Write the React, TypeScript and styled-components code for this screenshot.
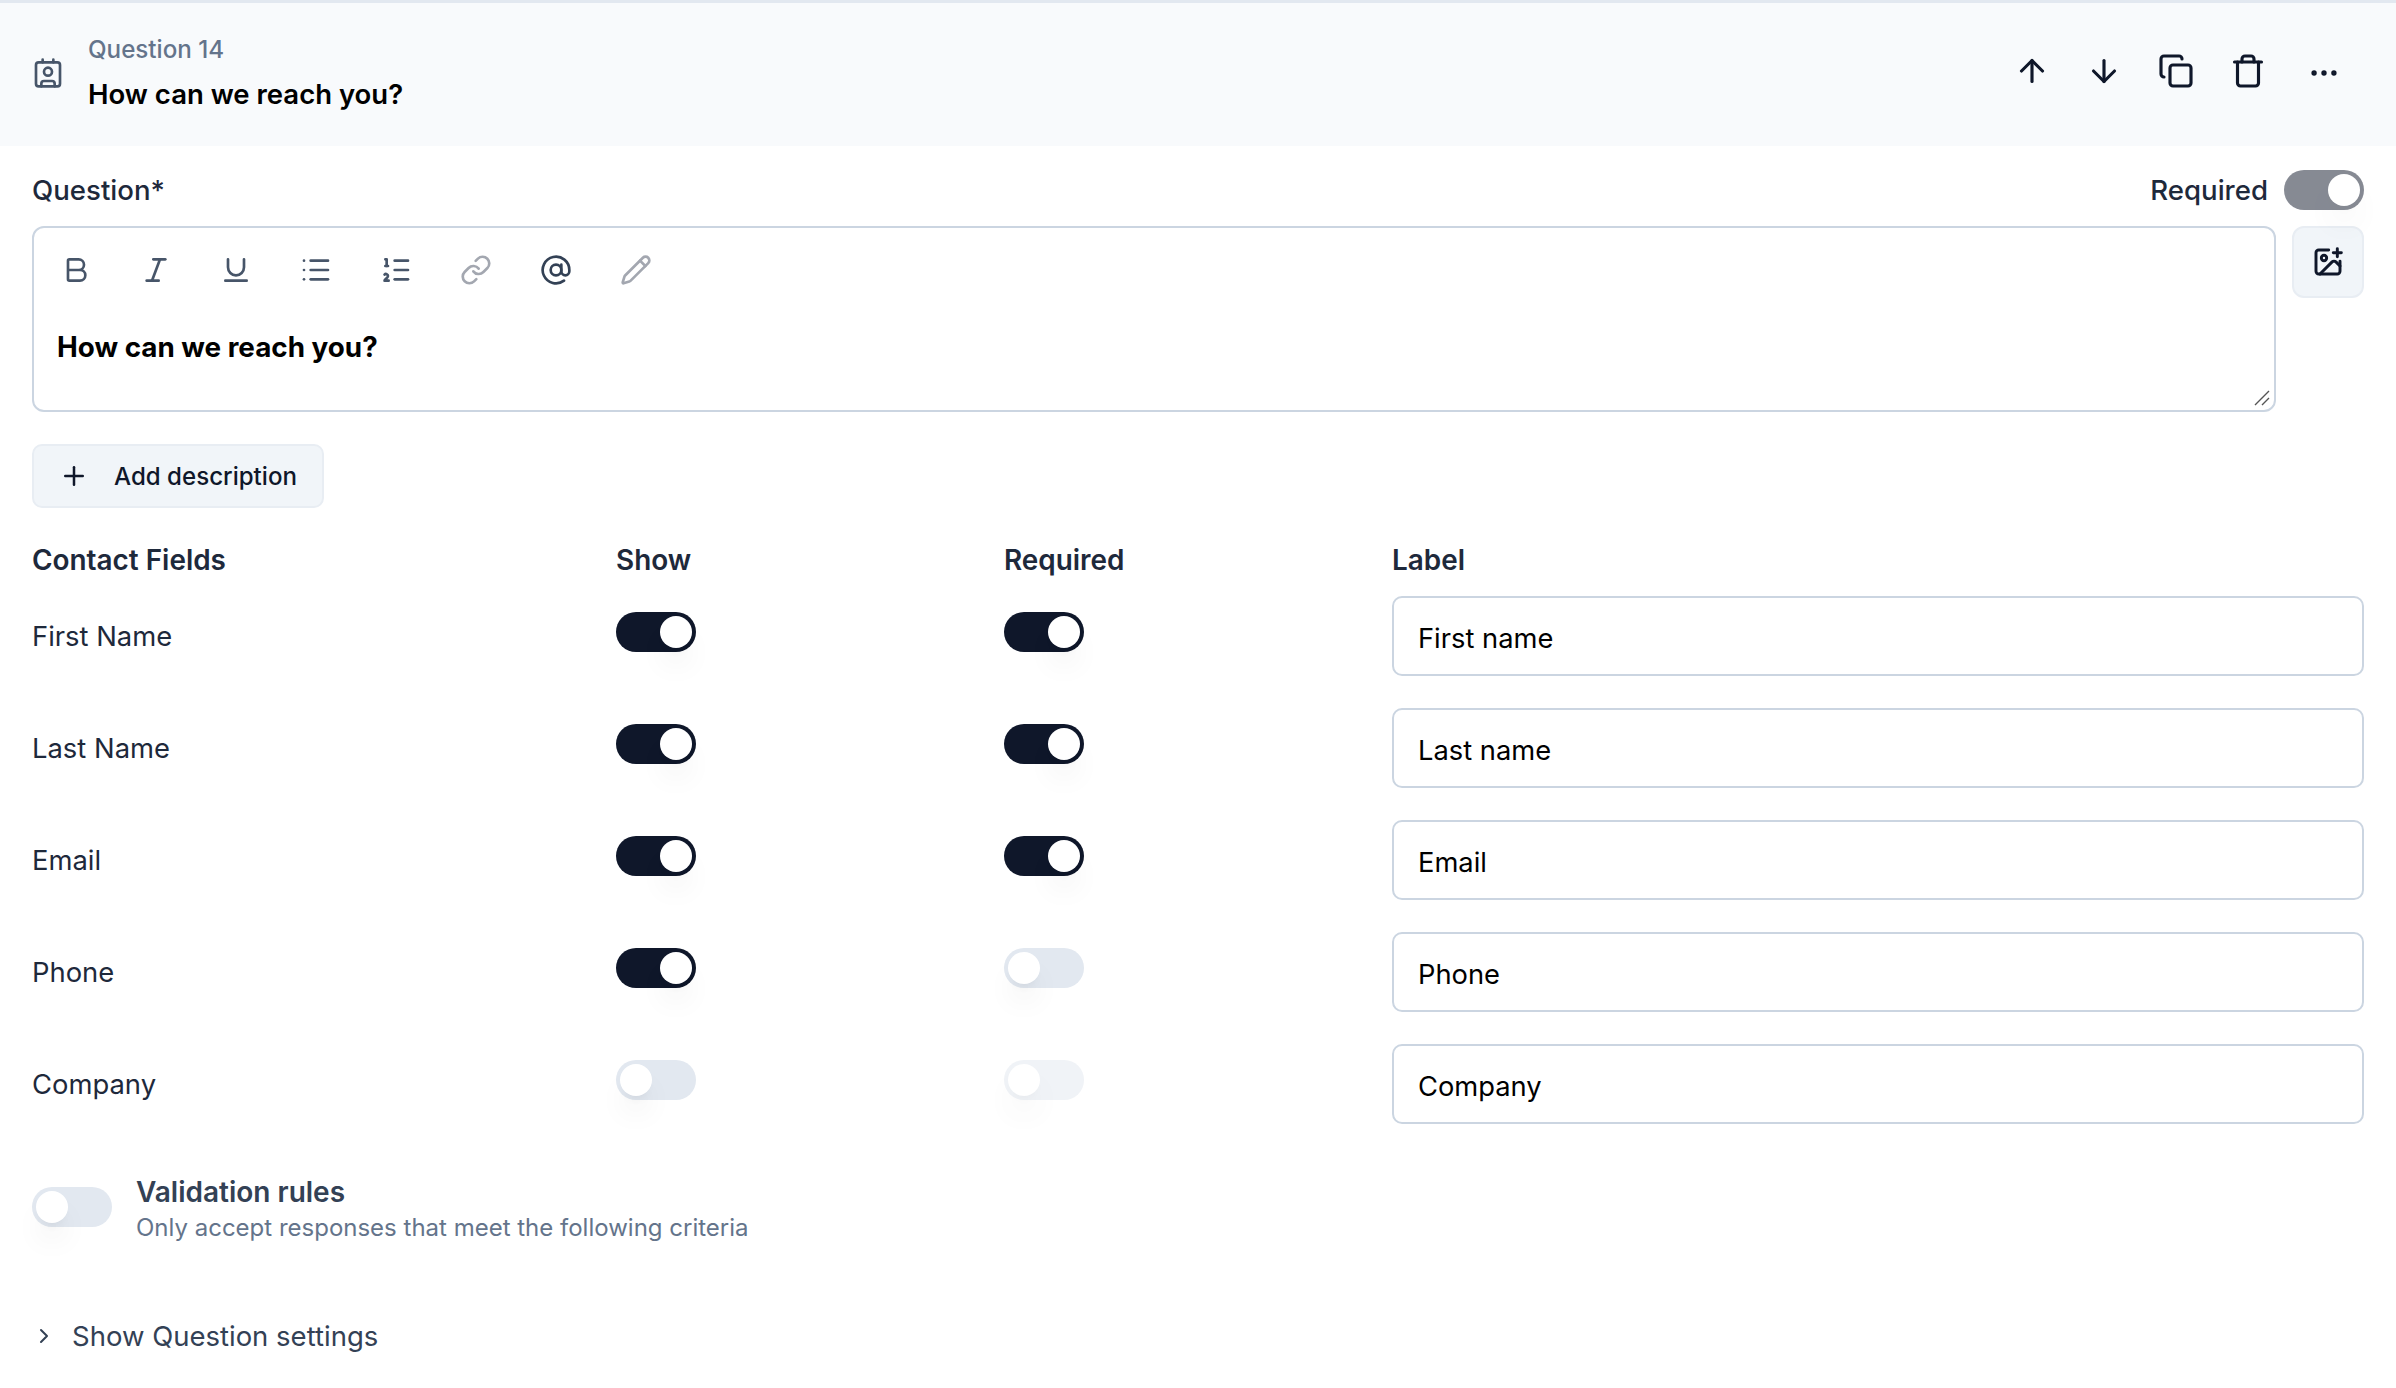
import React from "react";
import styled, { createGlobalStyle } from "styled-components";
import {
  ArrowDown, ArrowUp, AtSign, Bold, ChevronRight, Contact, Copy, Ellipsis, ImagePlus,
  Italic, Link, List, ListOrdered, Pencil, Plus, Trash, Underline,
} from "lucide-react";

const Global = createGlobalStyle`
  html, body { margin: 0; background: #fff; }
  body { font-family: Inter, "Noto Sans", sans-serif; -webkit-font-smoothing: antialiased; }
  * { box-sizing: border-box; }
`;

const Page = styled.div`
  width: 2396px;
  height: 1388px;
  overflow: hidden;
`;

const Header = styled.header`
  height: 146px;
  border-top: 3px solid #e2e8f0;
  background: #f8fafc;
  padding: 0 32px;
  display: flex;
  align-items: center;
  justify-content: space-between;
`;

const HeaderLeft = styled.div`
  display: flex;
  align-items: center;
  gap: 24px;
  color: #475569;
`;

const HeaderIcon = styled.span`
  display: flex;
  margin-top: -3px;
`;

const Eyebrow = styled.div`
  font-size: 24.2px;
  line-height: 32px;
  font-weight: 500;
  color: #64748b;
  margin-top: -2px;
`;

const Title = styled.div`
  font-size: 27.5px;
  line-height: 40px;
  font-weight: 600;
  color: #000;
  margin-top: 8px;
`;

const Actions = styled.div`
  display: flex;
  align-items: center;
  color: #0f172a;
  margin-top: -8px;
`;

const ActionButton = styled.span<{ $w?: number; $low?: boolean }>`
  width: ${(p) => p.$w ?? 72}px;
  display: flex;
  justify-content: center;
  margin-top: ${(p) => (p.$low ? 4 : 0)}px;
`;

const Body = styled.div`
  padding: 24px 32px 0;
`;

const LabelRow = styled.div`
  height: 40px;
  display: flex;
  align-items: center;
  justify-content: space-between;
`;

const FieldLabel = styled.div`
  font-size: 27.6px;
  font-weight: 500;
  color: #1e293b;
`;

const RequiredWrap = styled.div`
  display: flex;
  align-items: center;
  gap: 16px;
`;

const EditorRow = styled.div`
  margin-top: 16px;
  display: flex;
  align-items: flex-start;
  gap: 16px;
`;

const Editor = styled.div`
  position: relative;
  flex: 1;
  height: 186px;
  border: 2px solid #cbd5e1;
  border-radius: 12px;
  padding: 25px 22px 0 2px;
`;

const Toolbar = styled.div`
  display: flex;
  align-items: center;
  color: #475569;
  height: 34px;
`;

const ToolButton = styled.span<{ $muted?: boolean; $dark?: boolean }>`
  width: 80px;
  display: flex;
  justify-content: center;
  color: ${(p) => (p.$muted ? "#a3a7b0" : p.$dark ? "#334155" : "#475569")};
`;

const EditorText = styled.div`
  margin-top: 40px;
  margin-left: 21px;
  font-size: 27.8px;
  line-height: 40px;
  font-weight: 700;
  color: #000;
`;

const ResizeHandle = styled.svg`
  position: absolute;
  right: 3px;
  bottom: 3px;
`;

const ImageButton = styled.div`
  width: 72px;
  height: 72px;
  border: 2px solid #e8edf3;
  border-radius: 12px;
  background: #f1f5f9;
  color: #0f172a;
  display: flex;
  align-items: center;
  justify-content: center;
`;

const AddButton = styled.div`
  margin-top: 32px;
  width: 292px;
  height: 64px;
  border: 2px solid #e8edf3;
  border-radius: 10px;
  background: #f1f5f9;
  color: #0f172a;
  display: flex;
  align-items: center;
  padding-left: 25px;
  gap: 25px;
  font-size: 24.1px;
  font-weight: 500;
`;

const Grid = styled.div`
  margin-top: 31px;
  display: grid;
  grid-template-columns: 584px 388px 388px 1fr;
`;

const ColHead = styled.div`
  height: 42px;
  font-size: 27.9px;
  line-height: 42px;
  font-weight: 600;
  color: #1e293b;
  margin-bottom: 13px;
`;

const Cell = styled.div`
  height: 112px;
`;

const RowName = styled(Cell)`
  padding-top: 24px;
  font-size: 27.4px;
  line-height: 36px;
  color: #1e293b;
`;

const ToggleCell = styled(Cell)`
  padding-top: 18px;
`;

const LabelCell = styled(Cell)`
  padding-top: 2px;
`;

const Track = styled.span<{ $on?: boolean; $dim?: boolean }>`
  position: relative;
  display: block;
  width: 80px;
  height: 40px;
  border-radius: 20px;
  background: ${(p) => (p.$on ? "#0f172a" : "#e2e8f0")};
  opacity: ${(p) => (p.$dim ? 0.5 : 1)};
`;

const Thumb = styled.span<{ $on?: boolean }>`
  position: absolute;
  top: 4px;
  left: ${(p) => (p.$on ? 44 : 4)}px;
  width: 32px;
  height: 32px;
  border-radius: 50%;
  background: #fff;
  box-shadow: 0 20px 30px -6px rgba(0, 0, 0, 0.1), 0 8px 12px -8px rgba(0, 0, 0, 0.1);
`;

const Toggle = ({ on, dim }: { on?: boolean; dim?: boolean }) => (
  <Track $on={on} $dim={dim}>
    <Thumb $on={on} />
  </Track>
);

const InputBox = styled.div`
  height: 80px;
  border: 2px solid #cbd5e1;
  border-radius: 10px;
  padding: 4px 0 0 24px;
  display: flex;
  align-items: center;
  font-size: 27.3px;
  color: #000;
`;

const Validation = styled.div`
  margin-top: 20px;
  display: flex;
  align-items: flex-start;
  gap: 24px;
`;

const ValidationToggle = styled.span`
  display: block;
  margin-top: 13px;
`;

const ValidationText = styled.div`
  margin-top: 0;
`;

const ValTitle = styled.div`
  font-size: 28px;
  line-height: 36px;
  font-weight: 600;
  color: #334155;
`;

const ValDesc = styled.div`
  font-size: 24px;
  line-height: 32px;
  color: #64748b;
  margin-top: 2px;
`;

const Settings = styled.div`
  margin-top: 72px;
  display: flex;
  align-items: center;
  gap: 16px;
  font-size: 27.5px;
  line-height: 40px;
  color: #334155;
`;

const rows: [string, boolean, boolean, boolean?][] = [
  ["First Name", true, true],
  ["Last Name", true, true],
  ["Email", true, true],
  ["Phone", true, false],
  ["Company", false, false, true],
];

export default function App() {
  return (
    <Page>
      <Global />
      <Header>
        <HeaderLeft>
          <HeaderIcon><Contact size={32} strokeWidth={2} /></HeaderIcon>
          <div>
            <Eyebrow>Question 14</Eyebrow>
            <Title>How can we reach you?</Title>
          </div>
        </HeaderLeft>
        <Actions>
          <ActionButton><ArrowUp size={36} strokeWidth={2.1} /></ActionButton>
          <ActionButton><ArrowDown size={36} strokeWidth={2.1} /></ActionButton>
          <ActionButton><Copy size={36} strokeWidth={2.1} /></ActionButton>
          <ActionButton><Trash size={36} strokeWidth={2.1} /></ActionButton>
          <ActionButton $w={80} $low><Ellipsis size={34} strokeWidth={1.8} /></ActionButton>
        </Actions>
      </Header>
      <Body>
        <LabelRow>
          <FieldLabel>Question*</FieldLabel>
          <RequiredWrap>
            <FieldLabel>Required</FieldLabel>
            <Toggle on dim />
          </RequiredWrap>
        </LabelRow>
        <EditorRow>
          <Editor>
            <Toolbar>
              <ToolButton><Bold size={32} strokeWidth={2} /></ToolButton>
              <ToolButton><Italic size={32} strokeWidth={2} /></ToolButton>
              <ToolButton><Underline size={32} strokeWidth={2} /></ToolButton>
              <ToolButton><List size={32} strokeWidth={2} /></ToolButton>
              <ToolButton><ListOrdered size={32} strokeWidth={2} /></ToolButton>
              <ToolButton $muted><Link size={32} strokeWidth={2} /></ToolButton>
              <ToolButton $dark><AtSign size={32} strokeWidth={2} /></ToolButton>
              <ToolButton $muted><Pencil size={32} strokeWidth={2} /></ToolButton>
            </Toolbar>
            <EditorText>How can we reach you?</EditorText>
            <ResizeHandle width="18" height="18" viewBox="0 0 18 18">
              <path d="M2 16 L16 2 M9 16 L16 9" stroke="#555" strokeWidth="1.4" />
            </ResizeHandle>
          </Editor>
          <ImageButton><ImagePlus size={32} strokeWidth={2.2} /></ImageButton>
        </EditorRow>
        <AddButton>
          <Plus size={30} strokeWidth={2} />
          Add description
        </AddButton>
        <Grid>
          <ColHead>Contact Fields</ColHead>
          <ColHead>Show</ColHead>
          <ColHead>Required</ColHead>
          <ColHead>Label</ColHead>
          {rows.map(([name, show, req, dim]) => (
            <React.Fragment key={name}>
              <RowName>{name}</RowName>
              <ToggleCell><Toggle on={show} /></ToggleCell>
              <ToggleCell><Toggle on={req} dim={dim} /></ToggleCell>
              <LabelCell><InputBox>{name === "First Name" ? "First name" : name === "Last Name" ? "Last name" : name}</InputBox></LabelCell>
            </React.Fragment>
          ))}
        </Grid>
        <Validation>
          <ValidationToggle><Toggle /></ValidationToggle>
          <ValidationText>
            <ValTitle>Validation rules</ValTitle>
            <ValDesc>Only accept responses that meet the following criteria</ValDesc>
          </ValidationText>
        </Validation>
        <Settings>
          <ChevronRight size={24} strokeWidth={2} />
          Show Question settings
        </Settings>
      </Body>
    </Page>
  );
}
